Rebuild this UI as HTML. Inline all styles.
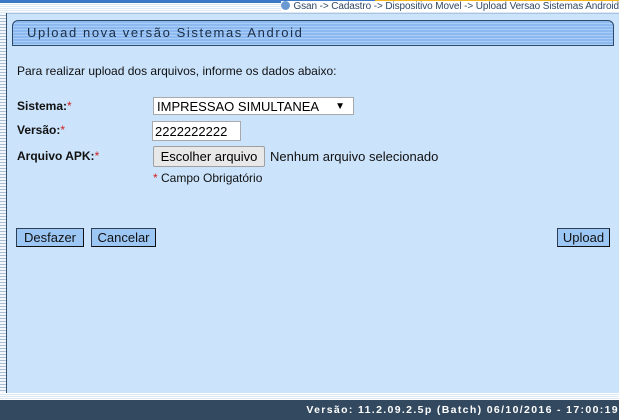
<!DOCTYPE html>
<html><head><meta charset="utf-8"><style>
body{margin:0;width:619px;height:420px;overflow:hidden;background:#fff;font-family:"Liberation Sans",Arial,sans-serif;position:relative}
.topbar{position:absolute;left:0;top:0;width:619px;height:3px;background:#3b78c8}
.topbar i{position:absolute;left:375px;top:0;width:244px;height:3px;background:#f3b61c}
.crumb{position:absolute;top:3px;left:0;width:619px;height:10px;background:repeating-linear-gradient(#fff 0 1px,#dfe9f3 1px 2px);}
.crumb span{position:absolute;right:0px;top:-2px;font-size:10px;letter-spacing:-0.1px;color:#2f4866;white-space:nowrap;background:#fff}
.crumb b{display:inline-block;width:9px;height:9px;border-radius:50%;background:#6a98d0;vertical-align:-1px;margin-right:3px}
.left{position:absolute;left:0;top:13px;width:6px;height:388px;background:repeating-linear-gradient(#f4f8fc 0 2px,#a9bdd3 2px 3px);border-right:1px solid #34506e}
.panel{position:absolute;left:7px;top:13px;width:612px;height:380px;background:#cbe3fb;border-bottom:1px solid #34506e;border-top:1px solid #a8c4e0}
.title{position:absolute;left:12px;top:20px;width:600px;height:24px;border:1px solid #2e4a6a;border-radius:6px 6px 0 0;background:repeating-linear-gradient(#8cbaf0 0 2px,#a9cdf6 2px 3px)}
.title span{position:absolute;left:14px;top:4px;font-size:13px;letter-spacing:1.6px;color:#1b2d45}
.t{position:absolute;font-size:12px;color:#111;white-space:nowrap}
.lab{font-weight:bold}
.r{color:#d02020;font-weight:normal}
.sel{position:absolute;left:153px;top:97px;height:18px;background:#fff;border:1px solid #a9a9a9;font-size:13px;line-height:18px;padding-left:3px;box-sizing:border-box;width:201px}
.inp{position:absolute;left:152px;top:121px;width:89px;height:20px;background:#fff;border:1px solid #a9a9a9;font-size:13px;line-height:19px;padding-left:2px;box-sizing:border-box}
.fbtn{position:absolute;left:153px;top:146px;width:112px;height:21px;background:#e8e8e8;border:1px solid #a0a0a0;border-radius:2px;box-sizing:border-box;font-size:13px;line-height:19px;text-align:center}
.btn{position:absolute;height:19px;background:#9cc6f4;border:1px solid #2e3e55;border-right-color:#111;border-bottom-color:#111;box-sizing:border-box;font-size:13px;line-height:17px;text-align:center;color:#111}
.foot{position:absolute;left:0;top:393px;width:619px;height:7px;background:repeating-linear-gradient(#fff 0 1px,#dde8f2 1px 2px)}
.foot2{position:absolute;left:0;top:400px;width:619px;height:20px;background:#33495f;color:#fff;font-size:10.5px;font-weight:bold;letter-spacing:1.35px;text-align:right;line-height:20px}
</style></head><body>
<div class="topbar"><i></i></div>
<div class="crumb"><span><b></b>Gsan -&gt; Cadastro -&gt; Dispositivo Movel -&gt; Upload Versao Sistemas Android</span></div>
<div class="left"></div>
<div class="panel"></div>
<div class="title"><span>Upload nova versão Sistemas Android</span></div>
<div class="t" style="left:17px;top:64px">Para realizar upload dos arquivos, informe os dados abaixo:</div>
<div class="t lab" style="left:17px;top:99px">Sistema:<span class="r">*</span></div>
<div class="t lab" style="left:17px;top:123px">Versão:<span class="r">*</span></div>
<div class="t lab" style="left:17px;top:149px">Arquivo APK:<span class="r">*</span></div>
<div class="sel">IMPRESSAO SIMULTANEA<span style="position:absolute;right:8px;top:0;font-size:10px">▼</span></div>
<div class="inp">2222222222</div>
<div class="fbtn">Escolher arquivo</div>
<div class="t" style="left:270px;top:149px;font-size:13px">Nenhum arquivo selecionado</div>
<div class="t" style="left:153px;top:171px"><span class="r">*</span> Campo Obrigatório</div>
<div class="btn" style="left:16px;top:228px;width:68px">Desfazer</div>
<div class="btn" style="left:91px;top:228px;width:65px">Cancelar</div>
<div class="btn" style="left:557px;top:228px;width:53px">Upload</div>
<div class="foot"></div>
<div class="foot2">Versão: 11.2.09.2.5p (Batch) 06/10/2016 - 17:00:19</div>
</body></html>
